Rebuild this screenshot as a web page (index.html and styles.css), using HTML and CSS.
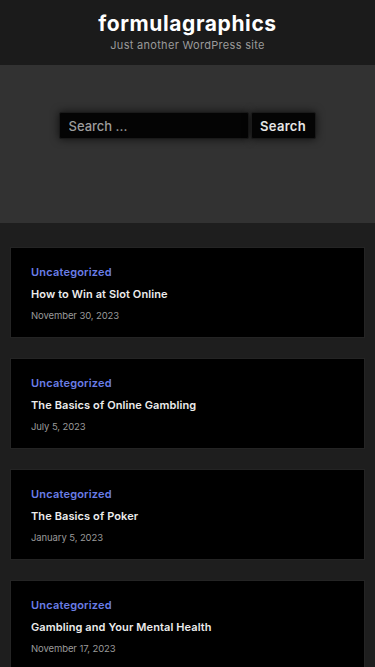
FILE: index.html
```html
<!DOCTYPE html>
<html>
<head>
<meta charset="utf-8">
<link rel="stylesheet" href="styles.css">
</head>
<body>
<header class="site-header">
  <h1 class="site-title">formulagraphics</h1>
  <p class="site-desc">Just another WordPress site</p>
</header>
<section class="search-band">
  <form class="search-form">
    <input class="search-field" type="text" placeholder="Search ...">
    <button class="search-btn" type="button">Search</button>
  </form>
</section>
<main class="posts">
  <article class="card">
    <a class="cat">Uncategorized</a>
    <h2 class="title">How to Win at Slot Online</h2>
    <p class="date">November 30, 2023</p>
  </article>
  <article class="card">
    <a class="cat">Uncategorized</a>
    <h2 class="title">The Basics of Online Gambling</h2>
    <p class="date">July 5, 2023</p>
  </article>
  <article class="card">
    <a class="cat">Uncategorized</a>
    <h2 class="title">The Basics of Poker</h2>
    <p class="date">January 5, 2023</p>
  </article>
  <article class="card">
    <a class="cat">Uncategorized</a>
    <h2 class="title">Gambling and Your Mental Health</h2>
    <p class="date">November 17, 2023</p>
  </article>
</main>
</body>
</html>
```
FILE: styles.css
```css
* { box-sizing: border-box; }
html, body { margin: 0; padding: 0; }
body {
  background: #1e1e1e;
  font-family: Inter, "Noto Sans", sans-serif;
  color: #eee;
}
.site-header {
  background: #1b1b1b;
  height: 65px;
  text-align: center;
  padding-top: 11px;
}
.site-title {
  margin: 0;
  font-size: 21px;
  line-height: 26px;
  font-weight: 700;
  color: #fff;
  letter-spacing: 0.6px;
}
.site-desc {
  margin: 1px 0 0;
  font-size: 11px;
  line-height: 14px;
  color: #9a9a9a;
  letter-spacing: 0.3px;
}
.search-band {
  background: #323232;
  height: 158px;
  padding-top: 47px;
  display: flex;
  justify-content: center;
}
.search-form {
  display: flex;
  height: 27px;
  gap: 2px;
  margin-right: 1px;
}
.search-field {
  width: 190px;
  height: 27px;
  background: #040404;
  border: 1px solid #1a1a1a;
  border-radius: 2px;
  box-shadow: 0 0 8px rgba(0,0,0,0.7);
  color: #ddd;
  font-family: inherit;
  font-size: 13px;
  font-weight: 500;
  padding: 0 9px;
  outline: none;
}
.search-field::placeholder { color: #9d9d9d; }
.search-btn {
  width: 65px;
  height: 27px;
  background: #040404;
  border: 1px solid #1a1a1a;
  border-radius: 2px;
  box-shadow: 0 0 8px rgba(0,0,0,0.7);
  color: #e6e6e6;
  font-family: inherit;
  font-size: 13px;
  font-weight: 600;
  padding: 0;
  letter-spacing: 0.3px;
}
.posts {
  padding: 24px 10px 0;
  display: flex;
  flex-direction: column;
  gap: 20px;
}
.card {
  background: #000;
  border: 1px solid #242424;
  height: 91px;
  padding: 17px 20px 0;
}
.cat {
  display: block;
  color: #6a7ee6;
  font-size: 11px;
  font-weight: 600;
  line-height: 14px;
  letter-spacing: 0.2px;
}
.title {
  margin: 8px 0 0;
  font-size: 11px;
  font-weight: 600;
  line-height: 14px;
  color: #ececec;
  letter-spacing: 0.1px;
}
.date {
  margin: 8px 0 0;
  font-size: 9.5px;
  line-height: 13px;
  color: #9a9a9a;
  letter-spacing: -0.1px;
}
```
